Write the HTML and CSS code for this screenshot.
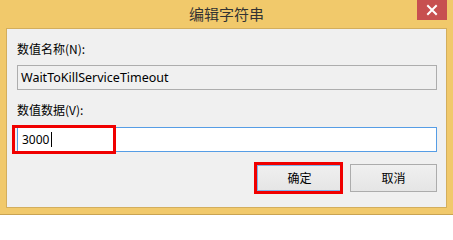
FILE: index.html
```html
<!DOCTYPE html>
<html>
<head>
<meta charset="utf-8">
<link rel="stylesheet" href="styles.css">
</head>
<body>
<div class="window">
  <div class="titlebar">
    <div class="title">编辑字符串</div>
    <div class="close">
      <svg width="12" height="12" viewBox="0 0 12 12"><path d="M2 2 L10 10 M10 2 L2 10" stroke="#fff" stroke-width="2" stroke-linecap="square"/></svg>
    </div>
  </div>
  <div class="client">
    <div class="label">数值名称(N):</div>
    <div class="field readonly">WaitToKillServiceTimeout</div>
    <div class="label second">数值数据(V):</div>
    <div class="field edit"><span class="val">3000</span><span class="caret"></span><div class="mark mark-field"></div></div>
    <div class="buttons">
      <div class="btn default">确定<div class="mark mark-btn"></div></div>
      <div class="btn">取消</div>
    </div>
  </div>
</div>
<div class="below"></div>
</body>
</html>
```
FILE: styles.css
```css
html, body {
  margin: 0;
  padding: 0;
  width: 453px;
  height: 217px;
  overflow: hidden;
  background: #ffffff;
  font-family: "Noto Sans", "Noto Sans CJK SC", sans-serif;
}
.window {
  background: #f1c96b;
  height: 215px;
  box-sizing: border-box;
  border-bottom: 1px solid #c9a352;
  padding: 0 6px;
}
.titlebar {
  height: 28px;
  display: flex;
  justify-content: center;
  position: relative;
}
.title {
  font-family: "Noto Sans CJK SC", sans-serif;
  font-size: 15px;
  line-height: 28px;
  color: #333;
}
.close {
  position: absolute;
  right: 0;
  top: 0;
  width: 30px;
  height: 20px;
  background: #c75050;
  display: flex;
  align-items: center;
  justify-content: center;
}
.client {
  height: 180px;
  box-sizing: border-box;
  background: #f0f0f0;
  border: 1px solid #d3ae5d;
  padding: 12px 9px 0 10px;
  display: flex;
  flex-direction: column;
}
.label {
  font-family: "Noto Sans CJK SC", sans-serif;
  font-size: 12px;
  line-height: 16px;
  height: 16px;
  color: #000;
}
.label.second {
  margin-top: 12px;
}
.field {
  margin-top: 8px;
  height: 25px;
  box-sizing: border-box;
  border: 1px solid #adadad;
  font-size: 12px;
  line-height: 23px;
  padding-left: 3px;
  color: #000;
  position: relative;
}
.field.readonly {
  background: #f0f0f0;
  font-size: 12.5px;
}
.field.edit {
  margin-top: 9px;
  background: #fff;
  border-color: #569de5;
  padding-left: 4px;
  display: flex;
  align-items: center;
}
.caret {
  display: inline-block;
  width: 1px;
  height: 15px;
  background: #000;
  margin-left: 2px;
}
.mark {
  position: absolute;
  border: 3px solid #f00000;
  box-sizing: border-box;
}
.mark-field {
  left: -6px;
  top: -3px;
  width: 104px;
  height: 29px;
}
.buttons {
  margin-top: 12px;
  display: flex;
  justify-content: flex-end;
  gap: 7px;
}
.btn {
  width: 87px;
  height: 28px;
  box-sizing: border-box;
  border: 1px solid #acacac;
  background: linear-gradient(#f0f0f0, #e5e5e5);
  font-family: "Noto Sans CJK SC", sans-serif;
  font-size: 12px;
  line-height: 26px;
  text-align: center;
  color: #000;
  position: relative;
}
.btn.default {
  border-color: #3c7fb1;
  box-shadow: inset 0 0 0 1px #7eb4ea;
}
.mark-btn {
  left: -3px;
  top: -3px;
  width: 89px;
  height: 32px;
}
.below {
  height: 1px;
}
```
